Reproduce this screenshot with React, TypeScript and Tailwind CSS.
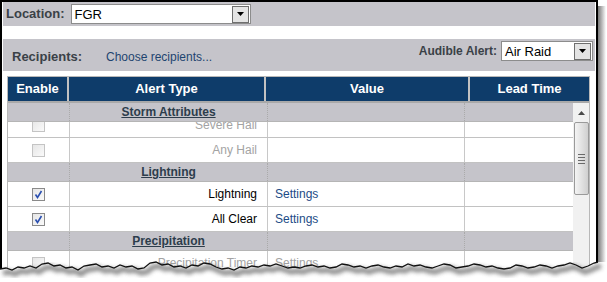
import React from "react";

const font = { fontFamily: '"Liberation Sans", Arial, sans-serif' };

const tornPoints =
  "0,269 6,268 12,270 18,267 24,268 30,266 36,268 42,264 48,263 54,266 60,265 66,268 72,267 78,270 84,266 90,265 96,264 102,267 108,266 114,268 120,265 126,267 132,266 138,269 144,268 150,263 156,262 162,265 168,264 174,267 180,266 186,268 192,265 198,266 204,263 210,264 216,267 222,269 228,268 234,270 240,267 246,268 252,266 258,267 264,265 270,266 276,264 282,266 288,268 294,267 300,268 306,266 312,265 318,267 324,266 330,268 336,267 342,264 348,265 354,267 360,266 366,268 372,266 378,265 384,267 390,268 396,266 402,267 408,264 414,266 420,265 426,267 432,268 438,266 444,264 450,265 456,268 462,267 468,266 474,264 480,265 486,267 492,266 498,268 504,269 510,268 516,265 522,266 528,268 534,267 540,265 546,266 552,268 558,266 564,265 570,263 576,265 582,268 588,266 594,263 598,262";

const DropButton = () => (
  <div className="w-[17px] h-[17px] border border-[#6f6f6f] bg-[#e4e4e4] flex items-center justify-center">
    <svg width="7" height="4" viewBox="0 0 7 4">
      <path d="M0 0h7L3.5 4z" fill="#000" />
    </svg>
  </div>
);

const Select = ({ value, width }: { value: string; width: string }) => (
  <div className={`${width} h-[20px] border border-[#8c8c8c] bg-white flex items-center justify-between pl-[3px] pr-[1px]`}>
    <span className="text-[13px] text-black leading-none">{value}</span>
    <DropButton />
  </div>
);

const Checkbox = ({ checked, disabled }: { checked?: boolean; disabled?: boolean }) => (
  <div
    className={`w-[13px] h-[13px] border ${disabled ? "border-[#c4c4c4]" : "border-[#8a8a8a]"} bg-gradient-to-br from-[#e6e6e6] to-[#fafafa] flex items-center justify-center`}
  >
    {checked && (
      <svg width="9" height="9" viewBox="0 0 9 9">
        <path d="M1.5 4.5L3.5 7.5L7.5 1" stroke="#2a4fb0" strokeWidth="1.6" fill="none" />
      </svg>
    )}
  </div>
);

const GroupRow = ({ title }: { title: string }) => (
  <div className="flex h-[19px] bg-[#c5c4ca] border-b border-[#b5b5b5]">
    <div className="w-[62px] border-r border-dotted border-[#aaaaaa]" />
    <div className="w-[198px] border-r border-dotted border-[#aaaaaa] flex items-center justify-center">
      <span className="text-[12px] font-bold underline text-[#2d3d4c]">{title}</span>
    </div>
    <div className="w-[197px] border-r border-dotted border-[#aaaaaa]" />
    <div className="flex-1" />
  </div>
);

type RowProps = {
  label: string;
  checked?: boolean;
  disabled?: boolean;
  settings?: boolean;
};

const DataRow = ({ label, checked, disabled, settings }: RowProps) => (
  <div className="flex h-[25px] bg-white border-b border-[#c2c2c2]">
    <div className="w-[62px] border-r border-[#c8c8c8] flex items-center justify-center">
      <Checkbox checked={checked} disabled={disabled} />
    </div>
    <div className="w-[198px] border-r border-[#c8c8c8] flex items-center justify-end pr-[10px]">
      <span className={`text-[12px] ${disabled ? "text-[#a3a3a3]" : "text-black"}`}>{label}</span>
    </div>
    <div className="w-[197px] border-r border-[#c8c8c8] flex items-center pl-[7px]">
      {settings && (
        <span className={`text-[12px] ${disabled ? "text-[#a3a3a3]" : "text-[#1d4b86]"}`}>Settings</span>
      )}
    </div>
    <div className="flex-1" />
  </div>
);

const Scrollbar = () => (
  <div className="w-[16px] bg-[#f1f1f1] flex flex-col items-center">
    <div className="h-[19px] w-full flex items-center justify-center">
      <svg width="7" height="4" viewBox="0 0 7 4">
        <path d="M3.5 0L7 4H0z" fill="#4a4a4a" />
      </svg>
    </div>
    <div className="w-[15px] h-[73px] rounded-[2px] border border-[#9a9a9a] bg-gradient-to-r from-[#f4f4f4] via-[#e2e2e2] to-[#cfcfcf] flex flex-col items-center justify-center gap-[2px]">
      <div className="w-[7px] h-[1px] bg-[#6a6a6a]" />
      <div className="w-[7px] h-[1px] bg-[#6a6a6a]" />
      <div className="w-[7px] h-[1px] bg-[#6a6a6a]" />
      <div className="w-[7px] h-[1px] bg-[#6a6a6a]" />
    </div>
  </div>
);

export default function App() {
  return (
    <div className="relative w-[607px] h-[282px] bg-white overflow-hidden" style={font}>
      <div className="flex">
        <div className="w-[598px] h-[282px] border-2 border-black bg-white px-[1px] flex flex-col">
          {/* location bar */}
          <div className="h-[24px] bg-[#c5c4ca] flex items-center pl-[3px] gap-[6px]">
            <span className="text-[13px] font-bold text-[#3a4147]">Location:</span>
            <Select value="FGR" width="w-[180px]" />
          </div>

          <div className="h-[13px]" />

          {/* recipients bar */}
          <div className="h-[32px] bg-[#c5c4ca] flex items-start justify-between pl-[9px] pr-[2px]">
            <div className="flex items-center h-full pt-[3px]">
              <span className="text-[13px] font-bold text-[#3a4147] w-[94px]">Recipients:</span>
              <span className="text-[12px] text-[#1e4470]">Choose recipients...</span>
            </div>
            <div className="flex items-center gap-[4px] pt-[2px]">
              <span className="text-[12px] font-bold text-[#3a4147]">Audible Alert:</span>
              <Select value="Air Raid" width="w-[92px]" />
            </div>
          </div>

          <div className="h-[5px]" />

          {/* table */}
          <div className="ml-[4px] w-[583px] flex-1 border border-[#b8b8b8] border-b-0 flex flex-col">
            <div className="flex h-[26px] bg-[#0e3c6a] border-b-2 border-[#a9a9a9] text-white text-[13px] font-bold">
              <div className="w-[61px] border-r-2 border-[#c2c2c2] flex items-center justify-center">Enable</div>
              <div className="w-[197px] border-r-2 border-[#c2c2c2] flex items-center justify-center">Alert Type</div>
              <div className="w-[204px] border-r-2 border-[#c2c2c2] flex items-center justify-center">Value</div>
              <div className="flex-1 flex items-center justify-center">Lead Time</div>
            </div>
            <div className="flex flex-1">
              <div className="flex-1 flex flex-col">
                <GroupRow title="Storm Attributes" />
                <div className="h-[16px] overflow-hidden">
                  <div className="-mt-[9px]">
                    <DataRow label="Severe Hail" disabled />
                  </div>
                </div>
                <DataRow label="Any Hail" disabled />
                <GroupRow title="Lightning" />
                <DataRow label="Lightning" checked settings />
                <DataRow label="All Clear" checked settings />
                <GroupRow title="Precipitation" />
                <DataRow label="Precipitation Timer" disabled settings />
              </div>
              <Scrollbar />
            </div>
          </div>
        </div>
        {/* right drop shadow */}
        <div className="w-[8px] mt-[6px] h-[258px] bg-gradient-to-r from-[#7a7a7a] to-white" />
      </div>

      {/* torn bottom edge */}
      <svg className="absolute left-0 top-0" width="607" height="282" viewBox="0 0 607 282">
        <defs>
          <filter id="blur" x="-5%" y="-50%" width="110%" height="200%">
            <feGaussianBlur stdDeviation="2" />
          </filter>
        </defs>
        <polygon points={`${tornPoints} 607,262 607,282 0,282`} fill="#ffffff" />
        <polyline
          points={tornPoints}
          transform="translate(3,4)"
          fill="none"
          stroke="#6a6a6a"
          strokeWidth="5"
          filter="url(#blur)"
          opacity="0.8"
        />
        <polyline points={tornPoints} fill="none" stroke="#111" strokeWidth="1.3" />
      </svg>
    </div>
  );
}
